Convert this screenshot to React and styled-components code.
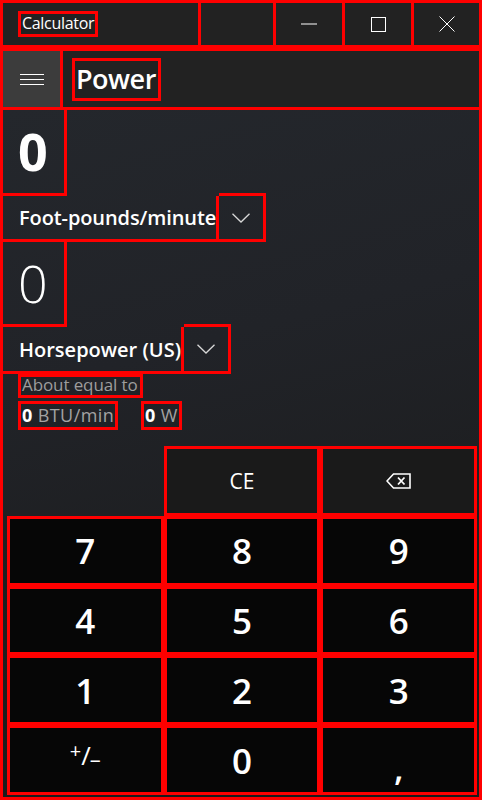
import React from 'react';
import styled, { createGlobalStyle } from 'styled-components';

const RED = '#ff0000';

const GlobalStyle = createGlobalStyle`
  body {
    margin: 0;
    background: #202020;
  }
  * { box-sizing: border-box; }
`;

const Window = styled.div`
  width: 482px;
  height: 800px;
  display: flex;
  flex-direction: column;
  background: #222222;
  color: #ffffff;
  font-family: "Open Sans", "Noto Sans", sans-serif;
  overflow: hidden;
`;

const TitleBar = styled.div`
  height: 48px;
  display: flex;
  border: 3px solid ${RED};
  background: #222222;
`;

const TitleCell = styled.div`
  width: 195px;
  display: flex;
  align-items: center;
  padding-left: 15px;
`;

const TitleLabel = styled.span`
  border: 3px solid ${RED};
  height: 26px;
  padding: 0 1px;
  font-size: 16px;
  line-height: 19px;
  letter-spacing: -0.3px;
`;

const CaptionCell = styled.div`
  width: ${(p) => p.w}px;
  border-left: 3px solid ${RED};
  display: flex;
  align-items: center;
  justify-content: center;
`;

const NavBar = styled.div`
  height: 62px;
  display: flex;
  align-items: center;
  border: 3px solid ${RED};
  background: #222222;
`;

const MenuButton = styled.div`
  width: 60px;
  align-self: stretch;
  background: #3c3c3c;
  border-right: 3px solid ${RED};
  display: flex;
  flex-direction: column;
  align-items: center;
  justify-content: center;
  gap: 4px;

  span {
    width: 24px;
    height: 1px;
    background: #ffffff;
  }
`;

const PageTitle = styled.h1`
  margin: 0 0 0 9px;
  height: 43px;
  border: 3px solid ${RED};
  padding: 0 2px 0 1px;
  font-size: 27px;
  font-weight: 600;
  line-height: 35px;
  letter-spacing: -0.5px;
`;

const Main = styled.div`
  flex: 1;
  display: flex;
  flex-direction: column;
  border: 3px solid ${RED};
  border-top: none;
  background: linear-gradient(165deg, #24272c 0%, #212328 35%, #1d1e20 65%, #1a1a1a 100%);
`;

const ValueBox = styled.div`
  width: 64px;
  height: ${(p) => p.h}px;
  border-right: 3px solid ${RED};
  border-bottom: 3px solid ${RED};
  padding-left: 15px;
  font-size: 52px;
  font-weight: ${(p) => (p.light ? 300 : 700)};
  line-height: ${(p) => p.h - 4}px;
`;

const UnitRow = styled.div`
  height: ${(p) => p.h}px;
  display: flex;
`;

const UnitName = styled.div`
  display: flex;
  align-items: center;
  padding-left: 16px;
  border-right: 3px solid ${RED};
  border-bottom: 3px solid ${RED};
  font-size: 20px;
  font-weight: 600;
  white-space: nowrap;
  letter-spacing: ${(p) => p.ls || 0}px;
`;

const ChevronBox = styled.div`
  width: 47px;
  display: flex;
  align-items: center;
  justify-content: center;
  border: 3px solid ${RED};
  border-left: none;
  margin-top: -3px;
`;

const AboutLabel = styled.div`
  align-self: flex-start;
  margin-left: 15px;
  height: 24px;
  border: 3px solid ${RED};
  padding: 0 2px 0 1px;
  font-size: 17px;
  line-height: 16px;
  color: #9d9d9d;
  letter-spacing: -0.1px;
`;

const EquivRow = styled.div`
  display: flex;
  gap: 23px;
  margin: 3px 0 0 15px;
`;

const EquivBox = styled.div`
  height: 29px;
  border: 3px solid ${RED};
  padding: 0 1px;
  font-size: 18px;
  line-height: 22px;
  color: #a3a3a3;
  letter-spacing: 0.4px;

  b {
    color: #ffffff;
    font-weight: 700;
  }
`;

const Keypad = styled.div`
  flex: 1;
  margin-top: 16px;
  display: grid;
  grid-template-columns: repeat(3, 1fr);
  grid-template-rows: repeat(5, 1fr);
  padding: 0 2px 2px 4px;
`;

const Key = styled.div`
  border: 3px solid ${RED};
  background: ${(p) => (p.op ? '#1a1a1a' : '#060606')};
  display: flex;
  align-items: center;
  justify-content: center;
  font-size: ${(p) => p.size || 35}px;
  font-weight: ${(p) => (p.op ? 400 : 600)};
  color: #ffffff;
`;

const Sign = styled.span`
  font-size: 26px;
  font-weight: 400;
  display: flex;
  align-items: center;
  margin-top: -10px;

  sup { font-size: 20px; position: relative; top: -5px; }
  sub { font-size: 22px; position: relative; top: 3px; margin-left: -1px; }
`;

const Comma = styled.span`
  margin-top: 14px;
`;

const Chevron = ({ w = 18 }) => (
  <svg width={w} height="10" viewBox="0 0 18 10">
    <polyline points="0.5,0.8 9,9 17.5,0.8" fill="none" stroke="#d8d8d8" strokeWidth="1.3" />
  </svg>
);

const Backspace = () => (
  <svg width="25" height="16" viewBox="0 0 25 16">
    <path d="M7.5 1 H24 V15 H7.5 L1 8 Z" fill="none" stroke="#fff" strokeWidth="1.6" strokeLinejoin="miter" />
    <path d="M12 4.5 L18.5 11.5 M18.5 4.5 L12 11.5" stroke="#fff" strokeWidth="1.8" />
  </svg>
);

const digits = ['7', '8', '9', '4', '5', '6', '1', '2', '3'];

export default function App() {
  return (
    <>
      <GlobalStyle />
      <Window>
        <TitleBar>
          <TitleCell>
            <TitleLabel>Calculator</TitleLabel>
          </TitleCell>
          <CaptionCell w={75} />
          <CaptionCell w={69}>
            <svg width="16" height="2" viewBox="0 0 16 2">
              <line x1="0" y1="1" x2="16" y2="1" stroke="#fff" strokeWidth="1" />
            </svg>
          </CaptionCell>
          <CaptionCell w={69}>
            <svg width="15" height="15" viewBox="0 0 15 15">
              <rect x="0.5" y="0.5" width="14" height="14" fill="none" stroke="#fff" strokeWidth="1" />
            </svg>
          </CaptionCell>
          <CaptionCell w={68}>
            <svg width="16" height="16" viewBox="0 0 16 16">
              <path d="M0.5 0.5 L15.5 15.5 M15.5 0.5 L0.5 15.5" stroke="#fff" strokeWidth="1" />
            </svg>
          </CaptionCell>
        </TitleBar>

        <NavBar>
          <MenuButton>
            <span />
            <span />
            <span />
          </MenuButton>
          <PageTitle>Power</PageTitle>
        </NavBar>

        <Main>
          <ValueBox h={86}>0</ValueBox>
          <UnitRow h={46}>
            <UnitName ls={-0.1}>Foot-pounds/minute</UnitName>
            <ChevronBox>
              <Chevron />
            </ChevronBox>
          </UnitRow>
          <ValueBox h={85} light>0</ValueBox>
          <UnitRow h={47}>
            <UnitName ls={0}>Horsepower (US)</UnitName>
            <ChevronBox>
              <Chevron />
            </ChevronBox>
          </UnitRow>
          <AboutLabel>About equal to</AboutLabel>
          <EquivRow>
            <EquivBox><b>0</b> BTU/min</EquivBox>
            <EquivBox><b>0</b> W</EquivBox>
          </EquivRow>

          <Keypad>
            <div />
            <Key op size={21}>CE</Key>
            <Key op><Backspace /></Key>
            {digits.map((d) => (
              <Key key={d}>{d}</Key>
            ))}
            <Key>
              <Sign><sup>+</sup>/<sub>–</sub></Sign>
            </Key>
            <Key>0</Key>
            <Key><Comma>,</Comma></Key>
          </Keypad>
        </Main>
      </Window>
    </>
  );
}
